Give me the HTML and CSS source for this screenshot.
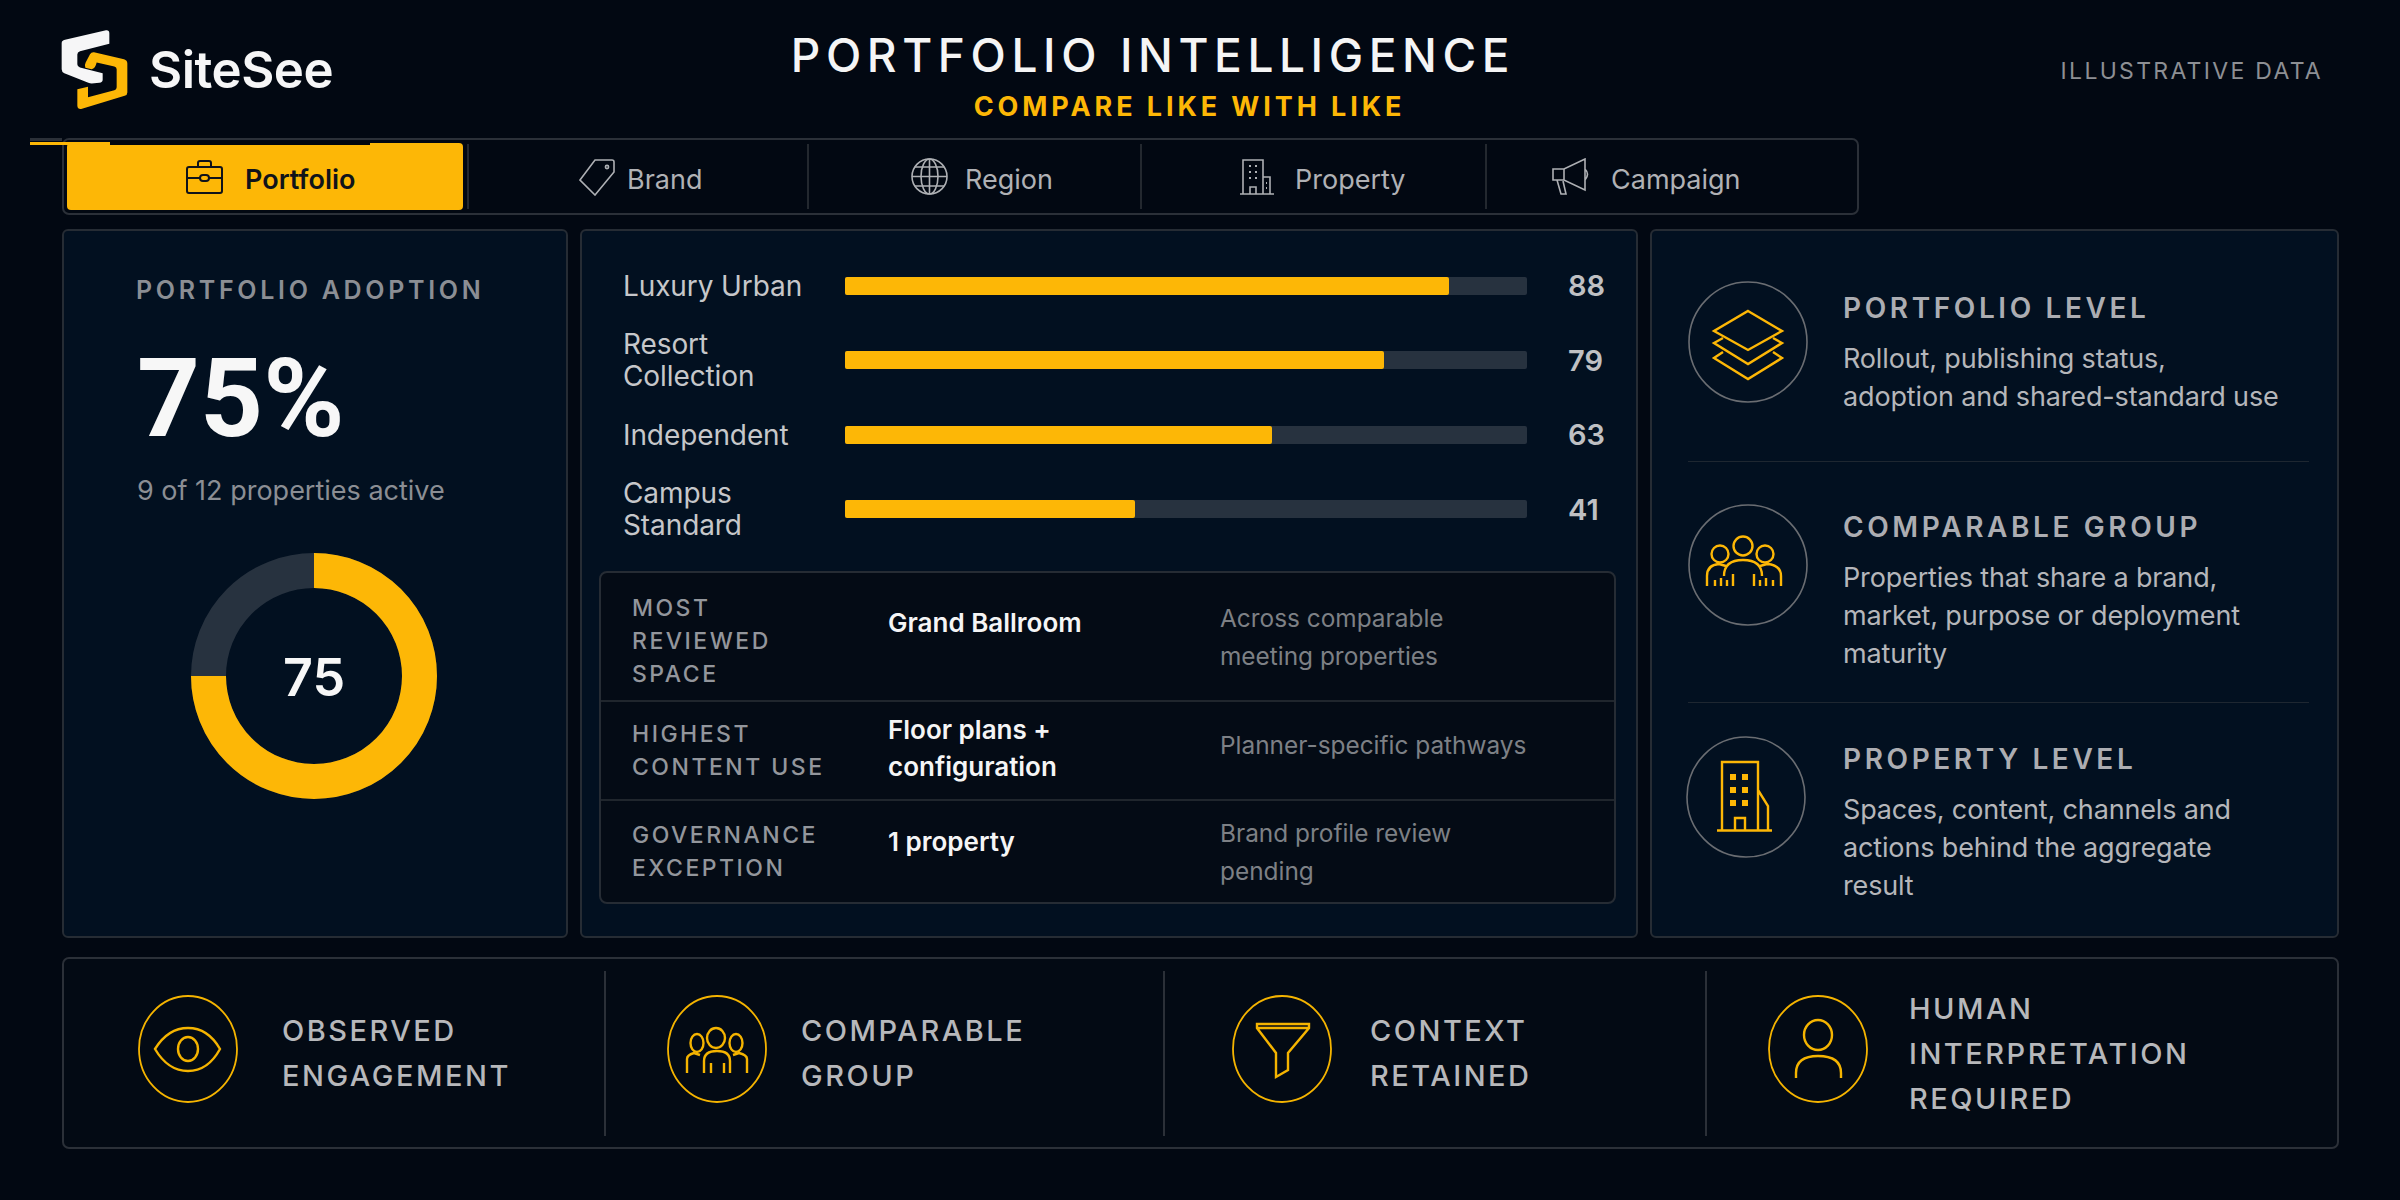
FILE: index.html
```html
<!DOCTYPE html>
<html lang="en">
<head>
  <meta charset="UTF-8">
  <title>Portfolio Intelligence</title>
  <link rel="stylesheet" href="styles.css">
</head>
<body>
  <div class="page">
    <!-- header -->
    <header class="top">
      <div class="brand">
        <svg class="logo" width="70" height="82" viewBox="120 60 210 245">
          <path fill="#f6f6f7" d="M135 92L258 63Q268 62 268 72V104L180 126Q172 128 172 136V165Q172 172 180 175L248 192V212Q248 220 238 221L215 223Q210 223 205 221L133 192Q125 188 125 180V102Q125 94 135 92Z"/>
          <path fill="#fdb706" d="M222 129L312 150Q322 153 322 163V250Q322 258 314 260L186 299Q173 302 172 290V240L204 233V264L283 243Q290 241 290 234V180Q290 174 283 172L230 160Q226 178 215 180L196 176Q192 170 197 160L210 135Q214 128 222 129Z"/>
        </svg>
        <span class="brand-name">SiteSee</span>
      </div>
      <div class="heading">
        <h1>PORTFOLIO INTELLIGENCE</h1>
        <p>COMPARE LIKE WITH LIKE</p>
      </div>
      <div class="tag">ILLUSTRATIVE DATA</div>
    </header>

    <!-- the torn strip above the active tab -->
    <div class="tear-line"></div>
    <div class="tear-yellow"></div>
    <div class="tear-black"></div>

    <!-- tabs -->
    <nav class="tabs">
      <div class="tab active">
        <svg width="37" height="34" viewBox="0 0 37 34"><rect x="1" y="7" width="35" height="26" rx="2"/><path d="M12 7V3Q12 1 14 1H23Q25 1 25 3V7M1 18H14M23 18H36"/><rect x="14" y="15" width="9" height="6" rx="3"/></svg>
        <span>Portfolio</span>
      </div>
      <div class="tab">
        <svg width="36" height="38" viewBox="0 0 36 38"><path d="M16 2H33Q35 2 35 4V14L16 37L1 22Z"/><circle cx="28" cy="9" r="1.6"/></svg>
        <span>Brand</span>
      </div>
      <div class="tab">
        <svg width="37" height="37" viewBox="0 0 37 37"><circle cx="18.5" cy="18.5" r="17.5"/><ellipse cx="18.5" cy="18.5" rx="8.5" ry="17.5"/><path d="M18.5 1V36M1 18.5H36M4 9H33M4 28H33"/></svg>
        <span>Region</span>
      </div>
      <div class="tab">
        <svg width="36" height="36" viewBox="0 0 36 36"><path d="M4 35V1H24V35M24 18H31V35M1 35H35M11 35V28H17V35"/><path class="dots" d="M10 7H12M16 7H18M10 13H12M16 13H18M10 19H12M16 19H18M27 24H28M27 29H28"/></svg>
        <span>Property</span>
      </div>
      <div class="tab">
        <svg width="39" height="37" viewBox="0 0 39 37"><path d="M1 11H12L33 1V32L12 22H1ZM12 11V22M5 22L9 36H14L11 23M33 11Q38 16 33 22"/></svg>
        <span>Campaign</span>
      </div>
    </nav>

    <main class="panels">
      <!-- adoption -->
      <section class="panel adoption">
        <div class="adoption-title">PORTFOLIO ADOPTION</div>
        <div class="adoption-num">75%</div>
        <div class="adoption-sub">9 of 12 properties active</div>
        <div class="donut">
          <svg width="246" height="246" viewBox="0 0 246 246">
            <circle class="donut-bg" cx="123" cy="123" r="105.500"/>
            <circle class="donut-val" cx="123" cy="123" r="105.500" pathLength="100" stroke-dasharray="75 25" transform="rotate(-90 123 123)"/>
          </svg>
          <span class="donut-num">75</span>
        </div>
      </section>

      <!-- comparison -->
      <section class="panel compare">
        <div class="bars">
          <div class="bar-row">
            <div class="bar-label">Luxury Urban</div>
            <div class="bar-track"><div class="bar-fill" style="width: 88.6%"></div></div>
            <div class="bar-val">88</div>
          </div>
          <div class="bar-row">
            <div class="bar-label">Resort<br>Collection</div>
            <div class="bar-track"><div class="bar-fill" style="width: 79%"></div></div>
            <div class="bar-val">79</div>
          </div>
          <div class="bar-row">
            <div class="bar-label">Independent</div>
            <div class="bar-track"><div class="bar-fill" style="width: 62.6%"></div></div>
            <div class="bar-val">63</div>
          </div>
          <div class="bar-row">
            <div class="bar-label">Campus<br>Standard</div>
            <div class="bar-track"><div class="bar-fill" style="width: 42.5%"></div></div>
            <div class="bar-val">41</div>
          </div>
        </div>
        <div class="facts">
          <div class="fact">
            <div class="fact-label">MOST<br>REVIEWED<br>SPACE</div>
            <div class="fact-value">Grand Ballroom</div>
            <div class="fact-note">Across comparable<br>meeting properties</div>
          </div>
          <div class="fact">
            <div class="fact-label">HIGHEST<br>CONTENT USE</div>
            <div class="fact-value">Floor plans +<br>configuration</div>
            <div class="fact-note">Planner-specific pathways</div>
          </div>
          <div class="fact">
            <div class="fact-label">GOVERNANCE<br>EXCEPTION</div>
            <div class="fact-value">1 property</div>
            <div class="fact-note">Brand profile review<br>pending</div>
          </div>
        </div>
      </section>

      <!-- levels -->
      <section class="panel levels">
        <div class="level">
          <svg class="level-icon" width="120" height="122" viewBox="0 0 120 122">
            <ellipse class="ring" cx="60" cy="61" rx="59" ry="60"/>
            <path d="M60 30L94 50L60 69L26 50ZM35 57L26 62L60 83L94 62L85 57M35 71L26 77L60 98L94 77L85 71"/>
          </svg>
          <div class="level-text">
            <h3>PORTFOLIO LEVEL</h3>
            <p>Rollout, publishing status,<br>adoption and shared-standard use</p>
          </div>
        </div>
        <div class="level">
          <svg class="level-icon" width="120" height="122" viewBox="0 0 120 122">
            <ellipse class="ring" cx="60" cy="61" rx="59" ry="60"/>
            <circle cx="55" cy="42" r="9.500"/><circle cx="32" cy="50" r="8.500"/><circle cx="77" cy="50" r="8.500"/>
            <path d="M36 72Q36 56 55 56Q74 56 74 72M19 82V72Q19 61 31 60L38 62M93 82V72Q93 61 79 60L72 62M27 82V76M33 82V74M39 82V76M45 82V70M66 82V70M72 82V76M78 82V74M85 82V76"/>
          </svg>
          <div class="level-text">
            <h3>COMPARABLE GROUP</h3>
            <p>Properties that share a brand,<br>market, purpose or deployment<br>maturity</p>
          </div>
        </div>
        <div class="level">
          <svg class="level-icon" width="120" height="122" viewBox="0 0 120 122">
            <ellipse class="ring" cx="60" cy="61" rx="59" ry="60"/>
            <path d="M36 94V26H72V94M72 54L82 70V94M31 94.500H86M49 94V82H59V94"/>
            <path class="win" d="M44 38h6v6h-6zM56 38h6v6h-6zM44 51h6v6h-6zM56 51h6v6h-6zM44 64h6v6h-6zM56 64h6v6h-6z"/>
          </svg>
          <div class="level-text">
            <h3>PROPERTY LEVEL</h3>
            <p>Spaces, content, channels and<br>actions behind the aggregate<br>result</p>
          </div>
        </div>
      </section>
    </main>

    <!-- bottom strip -->
    <footer class="strip">
      <div class="strip-item">
        <svg width="100" height="108" viewBox="0 0 100 108"><ellipse cx="50" cy="54" rx="49" ry="53"/><path class="thick" d="M17 54Q30 33 50 33Q70 33 82 54Q70 76 50 76Q30 76 17 54Z"/><ellipse class="thick" cx="50" cy="54" rx="10" ry="12"/></svg>
        <div class="strip-text">OBSERVED<br>ENGAGEMENT</div>
      </div>
      <div class="strip-item">
        <svg width="100" height="108" viewBox="0 0 100 108"><ellipse cx="50" cy="54" rx="49" ry="53"/><g class="thick"><ellipse cx="49" cy="43" rx="9" ry="10"/><ellipse cx="30" cy="48" rx="6.500" ry="9"/><ellipse cx="69" cy="48" rx="6.500" ry="9"/><path d="M37 78V66Q37 56 50 56Q63 56 63 66V78M44 78V68M57 78V68M20 78V64Q20 60 27 58L33 60M80 78V64Q80 60 72 58L66 60"/></g></svg>
        <div class="strip-text">COMPARABLE<br>GROUP</div>
      </div>
      <div class="strip-item">
        <svg width="100" height="108" viewBox="0 0 100 108"><ellipse cx="50" cy="54" rx="49" ry="53"/><path class="thick" d="M25 29H77V33L56 58V75L44 82V58L25 33ZM25 33H77"/></svg>
        <div class="strip-text">CONTEXT<br>RETAINED</div>
      </div>
      <div class="strip-item">
        <svg width="100" height="108" viewBox="0 0 100 108"><ellipse cx="50" cy="54" rx="49" ry="53"/><ellipse class="thick" cx="50" cy="40" rx="14" ry="15"/><path class="thick" d="M28 83V78Q28 61 50 61Q73 61 73 78V83"/></svg>
        <div class="strip-text">HUMAN<br>INTERPRETATION<br>REQUIRED</div>
      </div>
    </footer>
  </div>
</body>
</html>
```

FILE: styles.css
```css
* {
  margin: 0;
  padding: 0;
  box-sizing: border-box;
}
body {
  background: #020812;
  font-family: Inter, "Liberation Sans", sans-serif;
  overflow: hidden;
}
.page {
  position: relative;
  width: 2400px;
  height: 1200px;
  padding: 0 61px 0 62px;
}
svg {
  display: block;
  flex: none;
  fill: none;
}

/* header */
.top {
  display: grid;
  grid-template-columns: 560px 1054px 1fr;
  height: 138px;
}
.brand {
  display: flex;
  align-items: flex-start;
  gap: 19px;
  padding-top: 29px;
}
.logo {
  margin-left: -2px;
}
.brand-name {
  margin-top: 11px;
  font-size: 51px;
  line-height: 60px;
  font-weight: 600;
  letter-spacing: -0.5px;
  color: #f6f6f7;
}
.heading {
  text-align: center;
  padding: 32px 0 0 8px;
}
.heading h1 {
  font-size: 46px;
  line-height: 46px;
  font-weight: 500;
  letter-spacing: 5.6px;
  color: #f5f5f5;
}
.heading p {
  margin-top: 15px;
  padding-left: 73px;
  font-size: 27px;
  line-height: 28px;
  font-weight: 700;
  letter-spacing: 3.9px;
  color: #fdb706;
}
.tag {
  padding: 58px 16px 0 0;
  text-align: right;
  font-size: 23px;
  line-height: 26px;
  letter-spacing: 2.3px;
  color: #8d8f94;
}
.tear-line {
  position: absolute;
  left: 30px;
  top: 138px;
  width: 32px;
  height: 3px;
  background: #2b3038;
}
.tear-yellow {
  position: absolute;
  left: 30px;
  top: 142px;
  width: 80px;
  height: 3px;
  background: #fdb706;
}
.tear-black {
  position: absolute;
  left: 110px;
  top: 141px;
  width: 260px;
  height: 4px;
  background: #01060e;
}

/* tabs */
.tabs {
  display: grid;
  grid-template-columns: 403px 340px 333px 345px 373px;
  align-items: center;
  width: 1797px;
  height: 77px;
  border: 2px solid #2b3038;
  border-radius: 7px;
}
.tab {
  display: flex;
  align-items: center;
  height: 65px;
  border-left: 2px solid #23282f;
  font-size: 27px;
  color: #b0b1b5;
}
.tab span {
  padding-top: 5px;
}
.tab svg {
  stroke: #aeb0b4;
  stroke-width: 1.6;
}
.tab .dots {
  stroke-width: 2;
}
.tab:nth-child(2) { padding-left: 110px; gap: 12px; }
.tab:nth-child(3) { padding-left: 102px; gap: 17px; }
.tab:nth-child(4) { padding-left: 97px; gap: 20px; }
.tab:nth-child(5) { padding-left: 65px; gap: 20px; }
.tab.active {
  width: 396px;
  height: 67px;
  margin-left: 3px;
  padding-left: 119px;
  gap: 22px;
  border: 0;
  border-radius: 4px;
  background: #fdb706;
  font-weight: 600;
  color: #10131a;
}
.tab.active svg {
  stroke: #10131a;
  stroke-width: 2;
}

/* main panels */
.panels {
  display: grid;
  grid-template-columns: 506px 1058px 689px;
  gap: 12px;
  height: 709px;
  margin-top: 14px;
}
.panel {
  border: 2px solid #262c34;
  border-radius: 6px;
  background: #021020;
}

/* adoption */
.adoption {
  padding: 44px 0 0 72px;
}
.adoption-title {
  font-size: 25px;
  line-height: 30px;
  font-weight: 600;
  letter-spacing: 3.7px;
  color: #8b8e94;
}
.adoption-num {
  margin: 41px 0 0 1px;
  font-family: Roboto, "Liberation Sans", sans-serif;
  font-size: 110px;
  line-height: 106px;
  font-weight: 700;
  color: #f7f7f7;
}
.adoption-sub {
  margin: 21px 0 0 1px;
  font-size: 27px;
  line-height: 36px;
  color: #8b8e94;
}
.donut {
  position: relative;
  width: 246px;
  height: 246px;
  margin: 44px 0 0 55px;
}
.donut circle {
  stroke-width: 35;
}
.donut-bg {
  stroke: #27323f;
}
.donut-val {
  stroke: #fdb706;
}
.donut-num {
  position: absolute;
  inset: 0;
  display: flex;
  align-items: center;
  justify-content: center;
  padding-top: 2px;
  font-size: 52px;
  font-weight: 600;
  color: #f7f7f7;
}

/* bars */
.compare {
  padding: 37px 20px 0 17px;
}
.bars {
  display: flex;
  flex-direction: column;
  gap: 25px;
}
.bar-row {
  display: flex;
  align-items: center;
}
.bar-label {
  width: 246px;
  padding-left: 24px;
  font-size: 28px;
  line-height: 32px;
  letter-spacing: -0.1px;
  color: #c6c7ca;
}
.bar-track {
  width: 682px;
  height: 18px;
  border-radius: 2px;
  background: #27323f;
}
.bar-fill {
  height: 100%;
  border-radius: 2px;
  background: #fdb706;
}
.bar-val {
  margin-left: 41px;
  font-size: 29px;
  font-weight: 600;
  color: #bfc0c3;
}

/* fact table */
.facts {
  display: grid;
  grid-template-rows: 127px 99px 103px;
  height: 333px;
  margin-top: 30px;
  border: 2px solid #262c34;
  border-radius: 8px;
  background: #040b15;
}
.fact {
  display: grid;
  grid-template-columns: 256px 332px 1fr;
  align-items: center;
  padding-left: 31px;
  border-top: 2px solid #20262d;
}
.fact:first-child {
  border-top: 0;
}
.fact-label {
  font-size: 23px;
  line-height: 33px;
  font-weight: 500;
  letter-spacing: 2.5px;
  color: #93969c;
}
.fact:nth-child(1) .fact-label { margin-top: 9px; }
.fact-value {
  font-size: 26px;
  line-height: 37px;
  font-weight: 600;
  color: #f5f5f5;
}
.fact:nth-child(1) .fact-value { margin-bottom: 28px; }
.fact:nth-child(2) .fact-value { margin-bottom: 5px; }
.fact:nth-child(3) .fact-value { margin-bottom: 20px; }
.fact-note {
  font-size: 24.4px;
  line-height: 38px;
  color: #7d8085;
}
.fact:nth-child(2) .fact-note { margin-bottom: 11px; }

/* levels */
.levels {
  display: grid;
  grid-template-rows: 230px 241px 1fr;
  padding: 0 28px 0 36px;
}
.level {
  display: flex;
  align-items: flex-start;
  gap: 35px;
  border-top: 1px solid #1e2731;
}
.level:first-child {
  border-top: 0;
  padding-top: 50px;
}
.level:nth-child(2) {
  padding-top: 42px;
}
.level:nth-child(3) {
  padding-top: 33px;
}
.level:nth-child(3) .level-icon {
  margin: 0 2px 0 -2px;
}
.level-icon {
  stroke: #fdb706;
  stroke-width: 2.4;
}
.level-icon .ring {
  stroke: #6a6d72;
  stroke-width: 1.6;
}
.level-icon .win {
  fill: #fdb706;
  stroke: none;
}
.level-text {
  padding-top: 9px;
}
.level:nth-child(2) .level-text { padding-top: 5px; }
.level:nth-child(3) .level-text { padding-top: 5px; }
.level h3 {
  font-size: 28px;
  line-height: 36px;
  font-weight: 600;
  letter-spacing: 3.6px;
  color: #acadb2;
}
.level p {
  margin-top: 14px;
  font-size: 27px;
  line-height: 38px;
  letter-spacing: -0.15px;
  color: #b5b6ba;
}

/* bottom strip */
.strip {
  display: grid;
  grid-template-columns: 540px 559px 542px 1fr;
  align-items: center;
  height: 192px;
  margin-top: 19px;
  border: 2px solid #2b3038;
  border-radius: 7px;
  background: #030a14;
}
.strip-item {
  display: flex;
  align-items: center;
  gap: 44px;
  height: 165px;
  padding-left: 61px;
  border-left: 2px solid #2b3038;
  font-size: 29px;
}
.strip-item:nth-child(1) {
  padding-left: 74px;
  border-left: 0;
}
.strip-item:nth-child(2) {
  gap: 34px;
}
.strip-item:nth-child(3) {
  gap: 38px;
  padding-left: 67px;
}
.strip-item:nth-child(4) {
  gap: 41px;
}
.strip-item svg {
  margin-bottom: 8px;
  stroke: #f5b400;
  stroke-width: 1.8;
}
.strip-item .thick {
  stroke-width: 2.4;
}
.strip-text {
  line-height: 45px;
  font-weight: 500;
  letter-spacing: 2.5px;
  color: #b7b8bb;
}
```
